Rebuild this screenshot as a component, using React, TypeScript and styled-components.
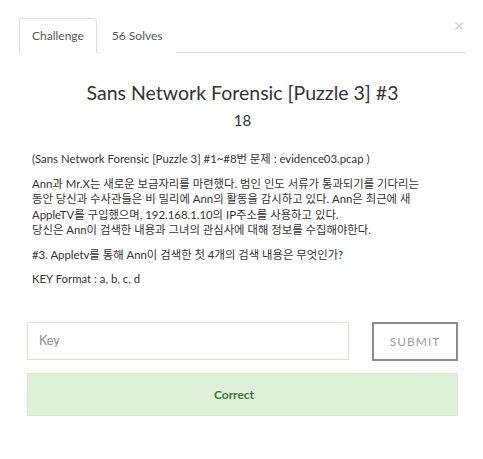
import React from 'react'
import styled, { createGlobalStyle } from 'styled-components'

const GlobalStyle = createGlobalStyle`
  html, body {
    margin: 0;
    padding: 0;
    background: #ffffff;
  }
  body {
    font-family: Lato, 'Noto Sans CJK KR', sans-serif;
    color: #333333;
  }
`

const Modal = styled.div`
  position: relative;
  width: 483px;
  height: 459px;
  box-sizing: border-box;
  padding: 18px 17px 0 19px;
  background: #ffffff;
`

const CloseButton = styled.button`
  position: absolute;
  top: 17px;
  right: 15px;
  width: 18px;
  height: 18px;
  padding: 0;
  border: 0;
  background: transparent;
  display: flex;
  align-items: center;
  justify-content: center;
  cursor: pointer;
`

const TabList = styled.ul`
  display: flex;
  margin: 0;
  padding: 0;
  list-style: none;
  border-bottom: 1px solid #dddddd;
`

const Tab = styled.li<{ active?: boolean }>`
  display: flex;
  align-items: center;
  height: 33px;
  margin: 0 2px -1px 0;
  padding: 0 12px;
  font-size: 12px;
  color: #555555;
  border: 1px solid ${({ active }) => (active ? '#dddddd' : 'transparent')};
  border-bottom-color: ${({ active }) => (active ? '#ffffff' : 'transparent')};
  border-radius: 4px 4px 0 0;
  background: #ffffff;
  cursor: pointer;
`

const Header = styled.div`
  display: flex;
  flex-direction: column;
  align-items: center;
  padding-top: 28px;
`

const Title = styled.h3`
  margin: 0;
  font-size: 19.5px;
  font-weight: 400;
  line-height: 24px;
  color: #333333;
`

const Points = styled.h4`
  margin: 6px 0 0;
  font-size: 15px;
  font-weight: 400;
  line-height: 18px;
  color: #333333;
`

const Body = styled.div`
  padding: 0 8px;
`

const Description = styled.div`
  margin-top: 22px;
  padding: 0 5px;
  font-size: 12px;
  line-height: 15.5px;
  font-size-adjust: 0.48;
  white-space: nowrap;
`

const Paragraph = styled.p`
  margin: 0 0 9px;
`

const Form = styled.form`
  display: flex;
  align-items: flex-start;
  gap: 23px;
  margin-top: 35px;
`

const KeyInput = styled.input`
  flex: 1;
  height: 38px;
  box-sizing: border-box;
  padding: 0 11px;
  font-family: Lato, sans-serif;
  font-size: 12.5px;
  color: #555555;
  border: 1px solid #d6e9c6;
  border-radius: 0;
  outline: none;
  &::placeholder {
    color: #8a8a8a;
  }
`

const SubmitButton = styled.button`
  width: 86px;
  height: 39px;
  box-sizing: border-box;
  padding: 0;
  font-family: Lato, sans-serif;
  font-size: 12px;
  letter-spacing: 1px;
  color: #9a9a9a;
  background: #ffffff;
  border: 2px solid #8c8c8c;
  border-radius: 0;
  cursor: pointer;
`

const Alert = styled.div<{ kind: 'success' | 'danger' }>`
  display: flex;
  align-items: center;
  justify-content: center;
  height: 43px;
  box-sizing: border-box;
  margin-top: 12px;
  padding-right: 17px;
  font-size: 12px;
  font-weight: 700;
  color: ${({ kind }) => (kind === 'success' ? '#3c763d' : '#a94442')};
  background: ${({ kind }) => (kind === 'success' ? '#dff0d8' : '#f2dede')};
  border: 1px solid ${({ kind }) => (kind === 'success' ? '#d6e9c6' : '#ebccd1')};
`

export default function App() {
  return (
    <>
      <GlobalStyle />
      <Modal>
        <CloseButton aria-label="Close">
          <svg width="8" height="8" viewBox="0 0 8 8">
            <path d="M0.5 0.5 L7.5 7.5 M7.5 0.5 L0.5 7.5" stroke="#c8c8c8" strokeWidth="1.3" />
          </svg>
        </CloseButton>
        <TabList>
          <Tab active>Challenge</Tab>
          <Tab>56 Solves</Tab>
        </TabList>
        <Header>
          <Title>Sans Network Forensic [Puzzle 3] #3</Title>
          <Points>18</Points>
        </Header>
        <Body>
          <Description>
            <Paragraph>(Sans Network Forensic [Puzzle 3] #1~#8번 문제 : evidence03.pcap )</Paragraph>
            <Paragraph>
              Ann과 Mr.X는 새로운 보금자리를 마련했다. 범인 인도 서류가 통과되기를 기다리는
              <br />
              동안 당신과 수사관들은 비 밀리에 Ann의 활동을 감시하고 있다. Ann은 최근에 새
              <br />
              AppleTV를 구입했으며, 192.168.1.10의 IP주소를 사용하고 있다.
              <br />
              당신은 Ann이 검색한 내용과 그녀의 관심사에 대해 정보를 수집해야한다.
            </Paragraph>
            <Paragraph>#3. Appletv를 통해 Ann이 검색한 첫 4개의 검색 내용은 무엇인가?</Paragraph>
            <Paragraph>KEY Format : a, b, c, d</Paragraph>
          </Description>
          <Form onSubmit={(e) => e.preventDefault()}>
            <KeyInput placeholder="Key" />
            <SubmitButton type="submit">SUBMIT</SubmitButton>
          </Form>
          <Alert kind="success">Correct</Alert>
        </Body>
      </Modal>
    </>
  )
}
